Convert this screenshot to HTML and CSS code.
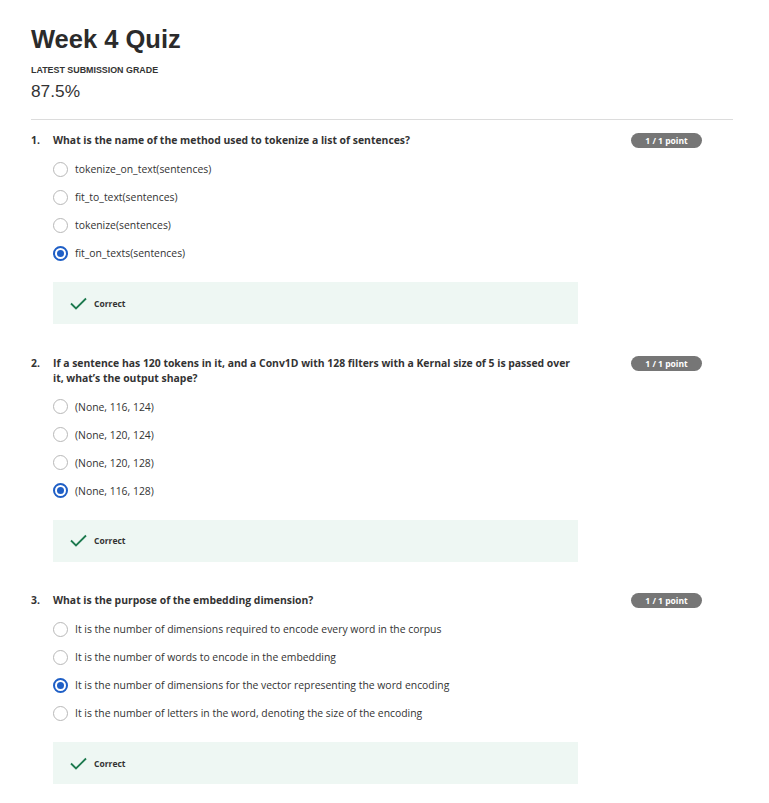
FILE: index.html
```html
<!DOCTYPE html>
<html>
<head>
<meta charset="utf-8">
<link rel="stylesheet" href="styles.css">
</head>
<body>
<div class="page">
  <h1 class="title">Week 4 Quiz</h1>
  <div class="grade-label">LATEST SUBMISSION GRADE</div>
  <div class="grade">87.5%</div>
  <hr class="divider">

  <div class="question">
    <div class="q-head">
      <div class="q-num">1.</div>
      <div class="q-text">What is the name of the method used to tokenize a list of sentences?</div>
      <div class="badge">1 / 1 point</div>
    </div>
    <ul class="options">
      <li class="option"><span class="radio"></span><span>tokenize_on_text(sentences)</span></li>
      <li class="option"><span class="radio"></span><span>fit_to_text(sentences)</span></li>
      <li class="option"><span class="radio"></span><span>tokenize(sentences)</span></li>
      <li class="option"><span class="radio checked"></span><span>fit_on_texts(sentences)</span></li>
    </ul>
    <div class="feedback">
      <svg class="check" width="17" height="13" viewBox="0 0 17 13"><path d="M1 6.5 L6 11.5 L16 1.5" fill="none" stroke="#1d7a4f" stroke-width="1.8"/></svg>
      <span>Correct</span>
    </div>
  </div>

  <div class="question">
    <div class="q-head">
      <div class="q-num">2.</div>
      <div class="q-text">If a sentence has 120 tokens in it, and a Conv1D with 128 filters with a Kernal size of 5 is passed over it, what’s the output shape?</div>
      <div class="badge">1 / 1 point</div>
    </div>
    <ul class="options">
      <li class="option"><span class="radio"></span><span>(None, 116, 124)</span></li>
      <li class="option"><span class="radio"></span><span>(None, 120, 124)</span></li>
      <li class="option"><span class="radio"></span><span>(None, 120, 128)</span></li>
      <li class="option"><span class="radio checked"></span><span>(None, 116, 128)</span></li>
    </ul>
    <div class="feedback">
      <svg class="check" width="17" height="13" viewBox="0 0 17 13"><path d="M1 6.5 L6 11.5 L16 1.5" fill="none" stroke="#1d7a4f" stroke-width="1.8"/></svg>
      <span>Correct</span>
    </div>
  </div>

  <div class="question">
    <div class="q-head">
      <div class="q-num">3.</div>
      <div class="q-text">What is the purpose of the embedding dimension?</div>
      <div class="badge">1 / 1 point</div>
    </div>
    <ul class="options">
      <li class="option"><span class="radio"></span><span>It is the number of dimensions required to encode every word in the corpus</span></li>
      <li class="option"><span class="radio"></span><span>It is the number of words to encode in the embedding</span></li>
      <li class="option"><span class="radio checked"></span><span>It is the number of dimensions for the vector representing the word encoding</span></li>
      <li class="option"><span class="radio"></span><span>It is the number of letters in the word, denoting the size of the encoding</span></li>
    </ul>
    <div class="feedback">
      <svg class="check" width="17" height="13" viewBox="0 0 17 13"><path d="M1 6.5 L6 11.5 L16 1.5" fill="none" stroke="#1d7a4f" stroke-width="1.8"/></svg>
      <span>Correct</span>
    </div>
  </div>
</div>
</body>
</html>
```
FILE: styles.css
```css
html, body {
  margin: 0;
  padding: 0;
  background: #ffffff;
}
.page {
  padding: 22px 36px 0 31px;
  color: #333333;
  font-family: "Liberation Sans", Arial, sans-serif;
}
.title {
  margin: 0;
  font-size: 25.5px;
  line-height: 34px;
  font-weight: 700;
  color: #2b2b2b;
}
.grade-label {
  margin-top: 8px;
  font-size: 8.9px;
  line-height: 12px;
  font-weight: 700;
  color: #333;
}
.grade {
  margin-top: 4px;
  font-size: 17.3px;
  line-height: 22px;
  color: #333;
}
.divider {
  margin: 17px 0 0 0;
  border: 0;
  border-top: 1px solid #dcdcdc;
  height: 0;
}
.question {
  font-family: "Open Sans", sans-serif;
  padding-top: 13px;
  padding-bottom: 18.5px;
}
.q-head {
  display: flex;
  align-items: flex-start;
}
.q-num {
  width: 22px;
  flex: none;
  font-size: 10.4px;
  line-height: 15px;
  font-weight: 700;
  color: #333;
}
.q-text {
  width: 525px;
  flex: none;
  font-size: 10.4px;
  line-height: 15px;
  font-weight: 700;
  color: #333;
}
.badge {
  margin-left: 53px;
  margin-top: 0;
  width: 71px;
  height: 15px;
  line-height: 15px;
  border-radius: 8px;
  background: #767676;
  color: #fff;
  font-size: 8.5px;
  font-weight: 700;
  text-align: center;
}
.options {
  list-style: none;
  margin: 7px 0 0 22px;
  padding: 0;
}
.option {
  display: flex;
  align-items: center;
  height: 28px;
  font-size: 10.4px;
  color: #333;
}
.radio {
  box-sizing: border-box;
  width: 15px;
  height: 15px;
  border: 1.5px solid #b8b8b8;
  border-radius: 50%;
  margin-right: 7px;
  flex: none;
  position: relative;
}
.radio.checked {
  border: 2px solid #1f5fc6;
}
.radio.checked::after {
  content: "";
  position: absolute;
  left: 2px;
  top: 2px;
  width: 7px;
  height: 7px;
  border-radius: 50%;
  background: #1f5fc6;
}
.feedback {
  margin: 15px 0 0 22px;
  width: 525px;
  height: 42px;
  background: #eef7f3;
  display: flex;
  align-items: center;
  padding-left: 17px;
  box-sizing: border-box;
  font-size: 8.5px;
  font-weight: 700;
  color: #333;
}
.check {
  margin-right: 7px;
}
```
